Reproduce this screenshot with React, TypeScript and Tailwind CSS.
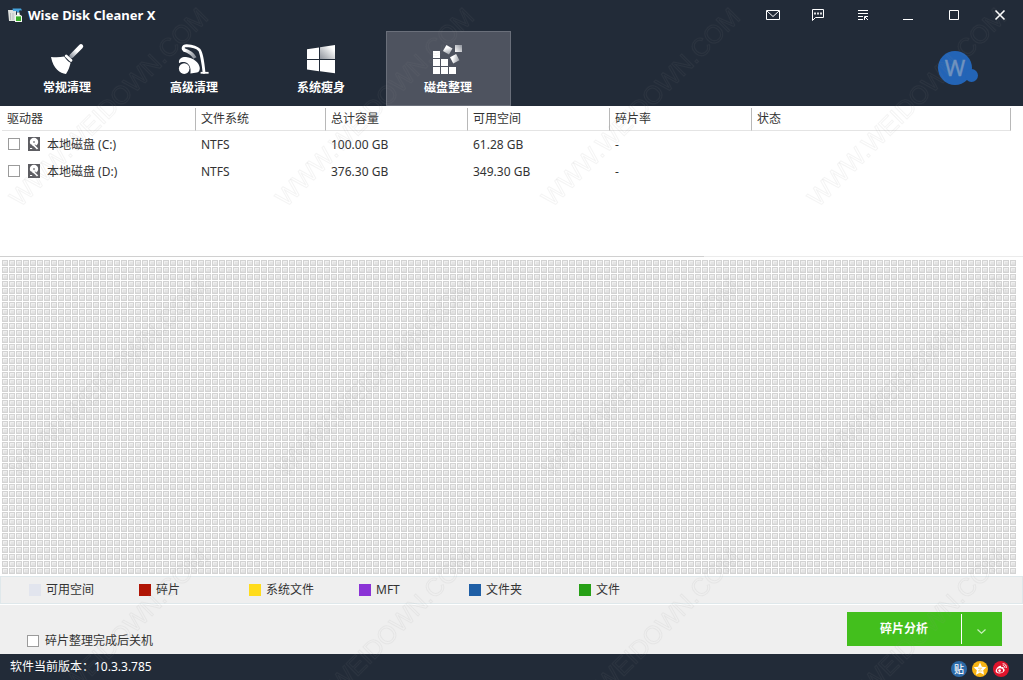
import React, { useState } from 'react';

const Broom = () => (
  <svg width="35" height="32" viewBox="0 0 35 32" aria-hidden="true">
    <defs>
      <linearGradient id="handle" gradientUnits="userSpaceOnUse" x1="19" y1="16" x2="29" y2="5">
        <stop offset="0" stopColor="#6b7280" />
        <stop offset="0.75" stopColor="#fff" />
      </linearGradient>
    </defs>
    <path d="M21.5 13 L31 3.4" stroke="url(#handle)" strokeWidth="4.4" strokeLinecap="round" />
    <path d="M16.2 13 L21 17.4" stroke="#fff" strokeWidth="2.8" strokeLinecap="round" />
    <path d="M1 14 C6 14.6 10 14.4 14.2 13.6 C16 16.5 18 18.6 20.6 19.8 C19.6 24 18.4 27.6 16 31 C10 30.4 3.4 26 1 14 Z" fill="#fff" />
  </svg>
);

const Vacuum = () => (
  <svg width="35" height="32" viewBox="0 0 35 32" fill="none" aria-hidden="true">
    <defs>
      <linearGradient id="hose" gradientUnits="userSpaceOnUse" x1="8" y1="6" x2="19" y2="15">
        <stop offset="0" stopColor="#fff" />
        <stop offset="1" stopColor="#7b818b" />
      </linearGradient>
    </defs>
    <path d="M6.5 6.6 C12 8.4 15.5 10.2 18 15" stroke="url(#hose)" strokeWidth="3.4" />
    <path d="M8 7.4 C5 6.4 5.6 2.6 9.6 2.6 C14 2.8 19.6 4 22.4 7 C24 9 26.2 21 27 29.4" stroke="#fff" strokeWidth="2.8" strokeLinecap="round" />
    <path d="M23.6 29.8 H31.6" stroke="#fff" strokeWidth="1.8" />
    <path d="M2 20.2 C1.4 15.4 5 13.8 9 14 C16 14.6 22.4 19.6 22.8 25 C22.8 27.4 22 28.8 20 29.6 L13.4 30.4 C14.4 24.6 12 19.6 7.4 18.9 C5 18.8 3.2 19.2 2 20.2 Z" fill="#fff" />
    <circle cx="7.2" cy="25.6" r="5.3" fill="#fff" />
  </svg>
);

const WindowPanes = () => (
  <svg width="35" height="32" viewBox="0 0 35 32" aria-hidden="true">
    <defs>
      <linearGradient id="pane" x1="1" y1="0" x2="0" y2="1">
        <stop offset="0.2" stopColor="#fff" />
        <stop offset="1" stopColor="#8f939c" />
      </linearGradient>
    </defs>
    <path d="M3 6.2 L15 4.5 V16 H3 Z" fill="#fff" />
    <path d="M16 4.2 L31 2 V16 H16 Z" fill="url(#pane)" />
    <path d="M3 17 H15 V28.2 L3 26.5 Z" fill="#fff" />
    <path d="M16 17 H31 V30.2 L16 28.2 Z" fill="#fff" />
  </svg>
);

const Blocks = () => (
  <svg width="35" height="32" viewBox="0 0 35 32" aria-hidden="true">
    <defs>
      <linearGradient id="block" x1="0" y1="0" x2="1" y2="1">
        <stop offset="0.3" stopColor="#fff" />
        <stop offset="1" stopColor="#9a9ea6" />
      </linearGradient>
      <linearGradient id="cube" x1="0" y1="1" x2="1" y2="0">
        <stop offset="0" stopColor="#fff" />
        <stop offset="1" stopColor="#8e929b" />
      </linearGradient>
    </defs>
    <g fill="#fff">
      <rect x="2" y="8" width="7" height="7" />
      <rect x="2" y="16" width="7" height="7" />
      <rect x="2" y="24" width="7" height="7" />
      <rect x="10" y="16" width="7" height="7" />
      <rect x="10" y="24" width="7" height="7" />
      <rect x="18" y="24" width="7" height="7" />
    </g>
    <rect x="13.2" y="3.2" width="7" height="7" fill="url(#block)" transform="rotate(30 16.7 6.7)" />
    <rect x="20.2" y="12.2" width="7" height="7" fill="url(#block)" transform="rotate(-28 23.7 15.7)" />
    <rect x="24" y="2" width="7" height="7" fill="url(#cube)" />
  </svg>
);

const Logo = () => (
  <svg width="14" height="14" viewBox="0 0 14 14" aria-hidden="true">
    <path d="M0 2 H8 V13 H1 Z" fill="#dfe2e0" />
    <path d="M2.5 5 V12 M5 5 V12" stroke="#b9bebd" />
    <path d="M4.5 .4 H13 L14 2.6 L11.5 2.2 L11 4.6 H9 L8.4 3 H5 Z" fill="#45a3dc" />
    <path d="M9 4.6 H11.6 V6.4 L14 8 V14 H7 V8 L9 6.4 Z" fill="#f4f7f2" />
    <rect x="8" y="8.4" width="5" height="4.6" fill="#38ad28" />
  </svg>
);

const DriveIcon = () => (
  <svg width="12" height="14" viewBox="0 0 12 14" aria-hidden="true" className="shrink-0">
    <rect width="12" height="14" fill="#5d5d62" />
    <circle cx="6" cy="5" r="4.2" fill="#fff" />
    <circle cx="6" cy="5" r="1" fill="#8a8a8e" />
    <path d="M1 7.6 H3.6 L6 10.4 V13 H1 Z" fill="#5d5d62" />
    <path d="M5.4 7.6 L9.6 11.8" stroke="#fff" strokeWidth="1.8" />
    <path d="M6.8 7.6 L10.8 11.2" stroke="#5d5d62" strokeWidth=".9" />
    <path d="M2 11.5 H4.2" stroke="#fff" />
  </svg>
);

const tabs = [
  { label: '常规清理', Icon: Broom },
  { label: '高级清理', Icon: Vacuum },
  { label: '系统瘦身', Icon: WindowPanes },
  { label: '磁盘整理', Icon: Blocks },
];

const controls = [
  { label: '邮件', icon: <path d="M1.5 3.5 h13 v9 h-13 z M2 4 L8 9.5 L14 4" /> },
  {
    label: '反馈',
    icon: (
      <>
        <path d="M2.5 2.5 h11 v8 h-8 l-3 3 z" />
        <path d="M4 6.5 h8" strokeWidth="2" strokeDasharray="2 1" opacity=".85" />
      </>
    ),
  },
  {
    label: '菜单',
    icon: <path d="M3 3.5 h10 M3 6.5 h10 M3 9.5 h5 M3 12.5 h5 M9.5 13 v-3.5 h3.5 M10 10 l3 3" />,
  },
  { label: '最小化', icon: <path d="M3 12.5 h10" /> },
  { label: '最大化', icon: <path d="M3.5 3.5 h9 v9 h-9 z" /> },
  { label: '关闭', icon: <path d="M3.5 3.5 l9 9 M12.5 3.5 l-9 9" strokeWidth="1.6" /> },
];

const columns = ['驱动器', '文件系统', '总计容量', '可用空间', '碎片率', '状态'];

const drives = [
  { name: '本地磁盘 (C:)', fs: 'NTFS', total: '100.00 GB', free: '61.28 GB' },
  { name: '本地磁盘 (D:)', fs: 'NTFS', total: '376.30 GB', free: '349.30 GB' },
];

const legend = [
  { label: '可用空间', color: 'bg-[#e2e5ee]' },
  { label: '碎片', color: 'bg-[#b01505]' },
  { label: '系统文件', color: 'bg-[#ffdc1c]' },
  { label: 'MFT', color: 'bg-[#8b33d6]' },
  { label: '文件夹', color: 'bg-[#1f5fa6]' },
  { label: '文件', color: 'bg-[#27a016]' },
];

const box =
  'm-0 size-3 shrink-0 appearance-none border border-[#9b9b9b] bg-white checked:bg-[#43bf1d]';

const Watermark = () => (
  <svg className="pointer-events-none absolute inset-0 size-full" aria-hidden="true">
    <defs>
      <pattern id="mark" width="266" height="270" patternUnits="userSpaceOnUse">
        <text
          x="20"
          y="208"
          transform="rotate(-45 20 208)"
          fontFamily="Liberation Sans, sans-serif"
          fontSize="25"
          fill="none"
          stroke="#808080"
          strokeOpacity=".09"
        >
          WWW.WEIDOWN.COM
        </text>
      </pattern>
    </defs>
    <rect width="100%" height="100%" fill="url(#mark)" />
  </svg>
);

export default function App() {
  const [active, setActive] = useState(3);

  return (
    <div className="relative flex min-h-screen flex-col overflow-hidden bg-[#222b38] font-['Noto_Sans','Noto_Sans_CJK_SC',sans-serif] text-xs text-[#333]">
      <header className="text-white">
        <div className="flex h-[31px] items-center justify-between pb-px">
          <div className="flex items-center gap-1.5 pl-2">
            <Logo />
            <h1 className="text-[13px] leading-4 font-bold">Wise Disk Cleaner X</h1>
          </div>
          <div className="flex">
            {controls.map((c, i) => (
              <button
                key={c.label}
                aria-label={c.label}
                className={`flex h-[30px] items-center justify-center pb-px ${i < 3 ? 'w-[45px]' : 'w-[46px]'}`}
              >
                <svg width="16" height="16" viewBox="0 0 16 16" fill="none" stroke="#fff">
                  {c.icon}
                </svg>
              </button>
            ))}
          </div>
        </div>
        <div className="flex items-start justify-between pl-[5px]">
          <nav className="flex gap-0.5">
            {tabs.map(({ label, Icon }, i) => (
              <button
                key={label}
                onClick={() => setActive(i)}
                className={`flex h-[75px] w-[125px] flex-col items-center gap-[5px] border pt-[11px] pr-px leading-4 font-bold ${
                  i === active ? 'border-[#6a6f7a] bg-[#4e535f]' : 'border-transparent'
                }`}
              >
                <Icon />
                {label}
              </button>
            ))}
          </nav>
          <a href="#account" aria-label="账户" className="mt-5 mr-11">
            <svg width="41" height="36" viewBox="0 0 41 36">
              <circle cx="17" cy="17" r="17" fill="#2364b6" />
              <circle cx="33.5" cy="24.5" r="6.5" fill="#2364b6" />
              <text x="17" y="25" textAnchor="middle" fontFamily="Noto Sans, sans-serif" fontSize="22" fill="#6f93c0" stroke="#6f93c0" strokeWidth=".4">
                W
              </text>
            </svg>
          </a>
        </div>
      </header>

      <main className="flex flex-1 flex-col bg-white">
        <section className="h-[150px] pt-0.5 pr-3 pl-0.5">
          <table className="w-full table-fixed border-separate border-spacing-0 text-left">
            <colgroup>
              <col className="w-[194px]" />
              <col className="w-[130px]" />
              <col className="w-[142px]" />
              <col className="w-[142px]" />
              <col className="w-[142px]" />
              <col />
            </colgroup>
            <thead>
              <tr>
                {columns.map((c) => (
                  <th key={c} className="h-[23px] border-r border-b border-r-[#b8b8b8] border-b-[#e4e4e4] py-0 pl-[5px] leading-4 font-normal">
                    {c}
                  </th>
                ))}
              </tr>
            </thead>
            <tbody>
              {drives.map((d) => (
                <tr key={d.name} className="h-[27px]">
                  <td className="py-0 pl-1.5">
                    <label className="flex h-[26px] items-center gap-[7px]">
                      <span className="flex items-center gap-2 pb-px">
                        <input type="checkbox" className={box} />
                        <DriveIcon />
                      </span>
                      {d.name}
                    </label>
                  </td>
                  <td className="py-0 pl-[5px]">{d.fs}</td>
                  <td className="py-0 pl-[5px]">{d.total}</td>
                  <td className="py-0 pl-[5px]">{d.free}</td>
                  <td className="py-0 pl-[5px]">-</td>
                  <td />
                </tr>
              ))}
            </tbody>
          </table>
        </section>

        <div className="flex h-px">
          <div className="w-[704px] bg-[#d0d0d0]" />
          <div className="flex-1 bg-[#ebebeb]" />
        </div>

        <section className="flex flex-1 pt-[3px] pr-1.5 pb-px pl-0.5">
          <svg className="min-h-[315px] w-full flex-1" role="img" aria-label="磁盘碎片图">
            <defs>
              <pattern id="cluster" width="7" height="7" patternUnits="userSpaceOnUse" shapeRendering="crispEdges">
                <rect width="6" height="6" fill="#d3d3d3" />
                <rect x="1" y="1" width="4" height="4" fill="#efefef" />
                <rect x="2" y="2" width="3" height="3" fill="#e4e4e4" />
                <rect x="1" y="4" width="4" height="1" fill="#dfdfdf" />
              </pattern>
            </defs>
            <rect width="100%" height="100%" fill="url(#cluster)" />
          </svg>
        </section>

        <ul className="flex h-7 items-center border border-[#dfe8eb] bg-[#efefef] pl-7">
          {legend.map((l) => (
            <li key={l.label} className="flex w-[110px] items-center gap-[5px]">
              <span className={`size-3 ${l.color}`} />
              {l.label}
            </li>
          ))}
        </ul>

        <section className="flex h-[50px] items-start justify-between border-t border-white bg-[#efefef] pt-[7px] pr-[21px] pl-[27px]">
          <label className="mt-[21px] flex items-center gap-1.5 leading-4">
            <input type="checkbox" className={box} />
            碎片整理完成后关机
          </label>
          <div className="flex h-[34px] items-center bg-[#43bf1d] text-white">
            <button className="h-full w-[114px] font-bold">碎片分析</button>
            <span className="h-[30px] w-px bg-white" />
            <button aria-label="更多操作" className="flex h-full w-10 items-center justify-center pt-1 pr-px">
              <svg width="9" height="5" viewBox="0 0 9 5" fill="none" stroke="#c9efbd" strokeWidth="1.2">
                <path d="M.5 .5 L4.5 4.2 L8.5 .5" />
              </svg>
            </button>
          </div>
        </section>
      </main>

      <footer className="flex h-[26px] items-center justify-between pr-3.5 pl-2.5 text-white">
        <span>软件当前版本：10.3.3.785</span>
        <div className="flex items-center gap-[5px] pt-1">
          <a href="#tieba" aria-label="贴吧">
            <svg width="16" height="16" viewBox="0 0 16 16">
              <circle cx="8" cy="8" r="8" fill="#2c6aa8" />
              <text x="8" y="11.5" textAnchor="middle" fontFamily="Noto Sans CJK SC, sans-serif" fontSize="10" fontWeight="500" fill="#fff">
                贴
              </text>
            </svg>
          </a>
          <a href="#qzone" aria-label="QQ空间">
            <svg width="16" height="16" viewBox="0 0 16 16">
              <circle cx="8" cy="8" r="8" fill="#f8b414" />
              <path d="M8 1.6 L9.9 5.7 L14.4 6.2 L11.2 9.3 L12 13.8 L8 11.6 L4 13.8 L4.8 9.3 L1.6 6.2 L6.1 5.7 Z" fill="#fff" />
              <path d="M6 7.2 H9.6 L6.4 10 H10.4" stroke="#f8c84a" fill="none" strokeWidth=".8" />
            </svg>
          </a>
          <a href="#weibo" aria-label="微博">
            <svg width="16" height="16" viewBox="0 0 16 16">
              <circle cx="8" cy="8" r="8" fill="#e0142c" />
              <path d="M6.6 5 C7.8 4.6 8.4 5.2 8.1 6.2 C10 5.6 11 6.2 10.6 7.4 C12 8 12 9.4 11 10.6 C9.4 12.6 5.4 13.2 3.4 11.6 C1.6 10 3.6 6.2 6.6 5 Z" fill="#fff" />
              <ellipse cx="7" cy="9.4" rx="3" ry="2.2" fill="#e0142c" />
              <circle cx="6.6" cy="9.6" r="1.3" fill="#fff" />
              <path d="M9.6 2.8 C12.2 2.6 13.8 4.6 13.2 7 M9.8 4.6 C11.2 4.5 11.9 5.4 11.7 6.6" stroke="#fff" fill="none" />
            </svg>
          </a>
        </div>
      </footer>

      <Watermark />
    </div>
  );
}
